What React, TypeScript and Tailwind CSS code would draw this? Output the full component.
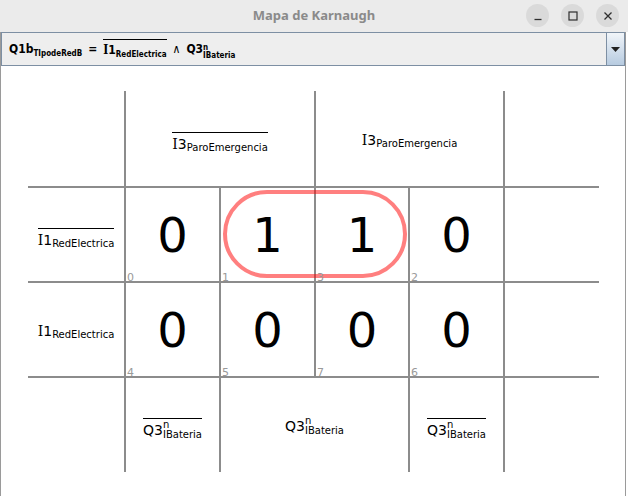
import React from "react";

const sans = "font-['DejaVu_Sans',sans-serif]";
const serif = "font-['DejaVu_Serif',serif]";

function Main({ text, className }: { text: string; className: string }) {
  // the variable letter "I" is drawn in a serif face, the rest in sans
  if (text.startsWith("I")) {
    return (
      <span className={className}>
        <span className={serif}>I</span>
        {text.slice(1)}
      </span>
    );
  }
  return <span className={className}>{text}</span>;
}

function Label({ main, sub, sup, bar }: { main: string; sub: string; sup?: string; bar?: boolean }) {
  return (
    <span className={bar ? "inline-block border-t border-black pt-[2px] mb-[-9px]" : "inline-block pt-[4px]"}>
      <span className="flex items-start whitespace-nowrap">
        <Main text={main} className="text-[14px] leading-[15px] mt-[2px]" />
        {sup ? (
          <span className="flex flex-col text-[10px]">
            <span className="leading-[8px]">{sup}</span>
            <span className="leading-[12px]">{sub}</span>
          </span>
        ) : (
          <span className="text-[10px] leading-[12px] mt-[7px]">{sub}</span>
        )}
      </span>
    </span>
  );
}

function Cell({ value, index, group }: { value: string; index: string; group?: boolean }) {
  return (
    <div className="relative flex items-center justify-center border-l-2 border-t-2 border-[#8c8c8c]">
      <span className="text-[48px] leading-none">{value}</span>
      <span className="absolute z-20 left-[1px] bottom-[-2px] text-[11px] leading-none text-[#9a9a9a]">{index}</span>
      {group && (
        <div className="absolute left-[2px] top-[2px] w-[184px] h-[88px] border-[4px] border-[#ff000080] rounded-full z-10" />
      )}
    </div>
  );
}

function LabelCell({ children, left, top, span }: { children?: React.ReactNode; left?: boolean; top?: boolean; span?: string }) {
  return (
    <div
      className={[
        "flex items-center justify-center border-[#8c8c8c]",
        left ? "border-l-2" : "",
        top ? "border-t-2" : "",
        span ?? "",
      ].join(" ")}
    >
      {children}
    </div>
  );
}

export default function App() {
  const rows = [
    { label: <Label main="I1" sub="RedElectrica" bar />, cells: [["0", "0"], ["1", "1"], ["1", "3"], ["0", "2"]] },
    { label: <Label main="I1" sub="RedElectrica" />, cells: [["0", "4"], ["0", "5"], ["0", "7"], ["0", "6"]] },
  ];

  return (
    <div className={`w-[628px] h-[496px] bg-white flex flex-col overflow-hidden text-black ${sans}`}>
      {/* title bar */}
      <div className="h-[32px] shrink-0 bg-[#ebebeb] flex items-center relative">
        <div className="flex-1 text-center font-['Noto_Sans',sans-serif] font-bold text-[13px] text-[#8a8a8a]">
          Mapa de Karnaugh
        </div>
        <div className="absolute right-[9px] top-[4px] flex gap-[12px]">
          <div className="w-[23px] h-[23px] rounded-full bg-[#dadada] flex items-center justify-center">
            <svg width="10" height="10" viewBox="0 0 10 10">
              <path d="M1.5 8.5h7" stroke="#2e2e2e" strokeWidth="1.3" />
            </svg>
          </div>
          <div className="w-[23px] h-[23px] rounded-full bg-[#dadada] flex items-center justify-center">
            <svg width="10" height="10" viewBox="0 0 10 10">
              <rect x="1" y="1" width="8" height="8" fill="none" stroke="#2e2e2e" strokeWidth="1.2" />
            </svg>
          </div>
          <div className="w-[23px] h-[23px] rounded-full bg-[#dadada] flex items-center justify-center">
            <svg width="10" height="10" viewBox="0 0 10 10">
              <path d="M1.5 1.5l7 7M8.5 1.5l-7 7" stroke="#2e2e2e" strokeWidth="1.3" />
            </svg>
          </div>
        </div>
      </div>

      {/* window body */}
      <div className="flex-1 w-[626px] border-l border-r border-[#9a9a9a] flex flex-col">
        {/* combo box */}
        <div className="h-[34px] shrink-0 flex border border-[#7d8fa3] bg-[#eeeeee]">
          <div className="flex-1 flex items-center pl-[7px] font-bold text-[12px] whitespace-nowrap font-['DejaVu_Sans_Condensed','DejaVu_Sans',sans-serif] [font-stretch:condensed]">
            <span>Q1b</span>
            <span className="text-[8px] mt-[9px]">TIpodeRedB</span>
            <span className="mx-[6px]">=</span>
            <span className="inline-block border-t border-black pt-[1px] mt-[1px]">
              <span className="flex items-start">
                <Main text="I1" className="" />
                <span className="text-[8px] mt-[8px]">RedElectrica</span>
              </span>
            </span>
            <span className="mx-[6px] font-normal">∧</span>
            <span>Q3</span>
            <span className="flex flex-col text-[8px] leading-[8px] mt-[5px]">
              <span>n</span>
              <span>IBateria</span>
            </span>
          </div>
          <div className="w-[18px] border-l border-[#7d8fa3] bg-gradient-to-b from-[#f1f5f9] to-[#b7cbe0] flex items-center justify-center">
            <svg width="9" height="5" viewBox="0 0 9 5">
              <path d="M0 0h9L4.5 5z" fill="#222" />
            </svg>
          </div>
        </div>

        {/* karnaugh map */}
        <div className="ml-[27px] mt-[25px] grid grid-cols-[96px_95px_95px_94px_95px_96px] grid-rows-[95px_95px_95px_96px]">
          {/* header row */}
          <LabelCell />
          <LabelCell left span="col-span-2">
            <Label main="I3" sub="ParoEmergencia" bar />
          </LabelCell>
          <LabelCell left span="col-span-2">
            <Label main="I3" sub="ParoEmergencia" />
          </LabelCell>
          <LabelCell left />

          {rows.map((r, i) => (
            <React.Fragment key={i}>
              <LabelCell top>{r.label}</LabelCell>
              {r.cells.map(([v, idx]) => (
                <Cell key={idx} value={v} index={idx} group={idx === "1"} />
              ))}
              <LabelCell left top />
            </React.Fragment>
          ))}

          {/* bottom row */}
          <LabelCell top />
          <LabelCell left top>
            <Label main="Q3" sup="n" sub="IBateria" bar />
          </LabelCell>
          <LabelCell left top span="col-span-2">
            <Label main="Q3" sup="n" sub="IBateria" />
          </LabelCell>
          <LabelCell left top>
            <Label main="Q3" sup="n" sub="IBateria" bar />
          </LabelCell>
          <LabelCell left top />
        </div>
      </div>
    </div>
  );
}
